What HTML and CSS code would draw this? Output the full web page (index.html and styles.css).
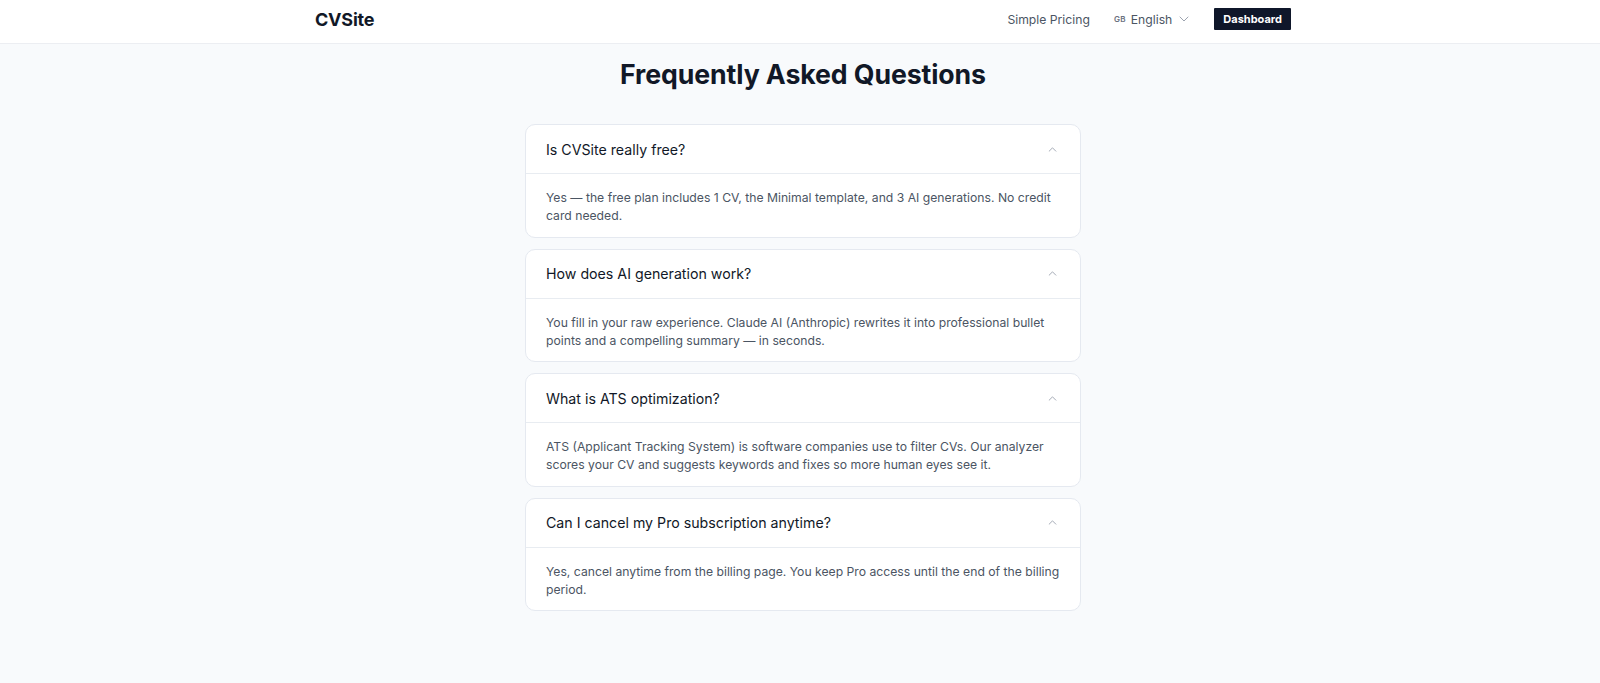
FILE: index.html
```html
<!DOCTYPE html>
<html lang="en">
<head>
<meta charset="utf-8">
<title>CVSite — FAQ</title>
<link rel="stylesheet" href="styles.css">
</head>
<body>
<header class="topbar">
  <div class="topbar-inner">
    <a class="brand" href="#">CVSite</a>
    <nav class="nav">
      <a class="nav-link" href="#">Simple Pricing</a>
      <button class="lang">
        <span class="lang-flag">GB</span>
        <span class="lang-name">English</span>
        <svg class="lang-caret" viewBox="0 0 10 6" width="10" height="6"><path d="M1 1l4 4 4-4" fill="none" stroke="currentColor" stroke-width="1" stroke-linecap="round" stroke-linejoin="round"/></svg>
      </button>
      <a class="btn-dark" href="#">Dashboard</a>
    </nav>
  </div>
</header>

<main class="page">
  <h1 class="title">Frequently Asked Questions</h1>

  <div class="faq-list">
    <section class="faq">
      <div class="faq-q">
        <span>Is CVSite really free?</span>
        <svg class="faq-caret" viewBox="0 0 10 6" width="9" height="5"><path d="M1 5l4-4 4 4" fill="none" stroke="currentColor" stroke-width="1.1" stroke-linecap="round" stroke-linejoin="round"/></svg>
      </div>
      <p class="faq-a">Yes — the free plan includes 1 CV, the Minimal template, and 3 AI generations. No credit card needed.</p>
    </section>

    <section class="faq">
      <div class="faq-q">
        <span>How does AI generation work?</span>
        <svg class="faq-caret" viewBox="0 0 10 6" width="9" height="5"><path d="M1 5l4-4 4 4" fill="none" stroke="currentColor" stroke-width="1.1" stroke-linecap="round" stroke-linejoin="round"/></svg>
      </div>
      <p class="faq-a">You fill in your raw experience. Claude AI (Anthropic) rewrites it into professional bullet points and a compelling summary — in seconds.</p>
    </section>

    <section class="faq">
      <div class="faq-q">
        <span>What is ATS optimization?</span>
        <svg class="faq-caret" viewBox="0 0 10 6" width="9" height="5"><path d="M1 5l4-4 4 4" fill="none" stroke="currentColor" stroke-width="1.1" stroke-linecap="round" stroke-linejoin="round"/></svg>
      </div>
      <p class="faq-a">ATS (Applicant Tracking System) is software companies use to filter CVs. Our analyzer scores your CV and suggests keywords and fixes so more human eyes see it.</p>
    </section>

    <section class="faq">
      <div class="faq-q">
        <span>Can I cancel my Pro subscription anytime?</span>
        <svg class="faq-caret" viewBox="0 0 10 6" width="9" height="5"><path d="M1 5l4-4 4 4" fill="none" stroke="currentColor" stroke-width="1.1" stroke-linecap="round" stroke-linejoin="round"/></svg>
      </div>
      <p class="faq-a">Yes, cancel anytime from the billing page. You keep Pro access until the end of the billing period.</p>
    </section>
  </div>
</main>
</body>
</html>
```

FILE: styles.css
```css
* { box-sizing: border-box; }

html, body {
  margin: 0;
  padding: 0;
}

body {
  background: #f8fafc;
  font-family: Inter, "Noto Sans", Arial, sans-serif;
  color: #111827;
  padding-left: 6px;
}

a { text-decoration: none; color: inherit; }

.topbar {
  background: #ffffff;
  border-bottom: 1px solid #eceef2;
  margin-left: -6px;
  padding-left: 6px;
}

.topbar-inner {
  width: 976px;
  height: 43px;
  padding-bottom: 5px;
  margin: 0 auto;
  display: flex;
  align-items: center;
  justify-content: space-between;
}

.brand {
  font-size: 18px;
  font-weight: 700;
  color: #111827;
  letter-spacing: -0.2px;
}

.nav {
  display: flex;
  align-items: center;
}

.nav-link {
  font-size: 12.2px;
  color: #4b5563;
  margin-right: 24px;
}

.lang {
  display: flex;
  align-items: center;
  background: none;
  border: 0;
  padding: 0;
  font-family: inherit;
  color: #4b5563;
  margin-right: 25px;
  cursor: pointer;
}

.lang-flag {
  font-size: 8px;
  font-weight: 600;
  color: #6b7280;
  margin-right: 5px;
  letter-spacing: 0.3px;
}

.lang-name {
  font-size: 12.2px;
  margin-right: 7px;
}

.lang-caret {
  color: #9ca3af;
}

.btn-dark {
  background: #0f172a;
  color: #ffffff;
  font-size: 11px;
  font-weight: 700;
  height: 22px;
  padding: 0 9px;
  display: flex;
  align-items: center;
  border-radius: 1px;
}

.page {
  padding: 14px 0 60px;
}

.title {
  margin: 0 0 34px;
  text-align: center;
  font-size: 26.7px;
  font-weight: 700;
  color: #111827;
  line-height: 32px;
  letter-spacing: -0.1px;
}

.faq-list {
  width: 556px;
  margin: 0 auto;
  display: flex;
  flex-direction: column;
  gap: 11px;
}

.faq {
  background: #ffffff;
  border: 1px solid #e5e9f0;
  border-radius: 10px;
}

.faq-q {
  height: 49px;
  padding: 0 23px 0 20px;
  display: flex;
  align-items: center;
  justify-content: space-between;
  border-bottom: 1px solid #e8ecf1;
  font-size: 14.2px;
  color: #111827;
}

.faq-caret {
  color: #9ca3af;
}

.faq-a {
  margin: 0;
  padding: 15px 20px 11px;
  font-size: 12.2px;
  line-height: 1.5;
  color: #4b5563;
}
```
